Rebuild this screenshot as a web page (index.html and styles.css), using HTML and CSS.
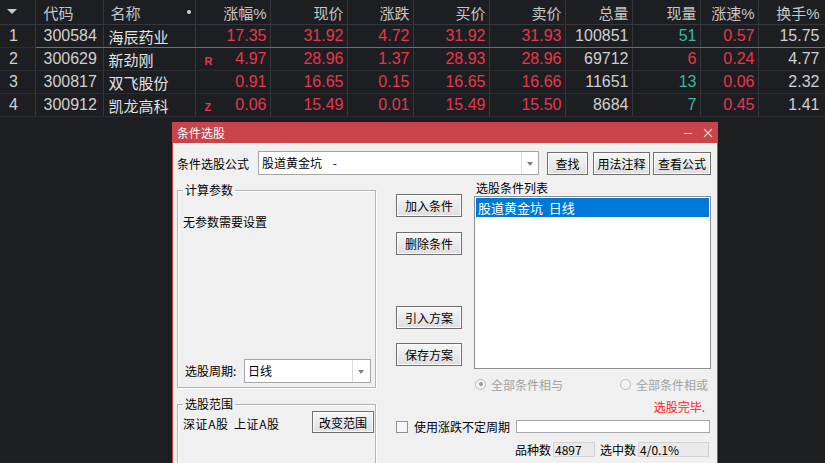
FILE: index.html
```html
<!DOCTYPE html>
<html lang="zh-CN">
  <head>
    <meta charset="UTF-8" />
    <meta name="viewport" content="width=device-width, initial-scale=1.0" />
    <title>条件选股</title>
    <link rel="stylesheet" href="styles.css">
  </head>
  <body>
    <table class="quotes">
      <colgroup>
        <col class="c-idx"><col class="c-code"><col class="c-name"><col class="c-pct">
        <col class="c-price"><col class="c-chg"><col class="c-bid"><col class="c-ask">
        <col class="c-vol"><col class="c-cur"><col class="c-speed"><col class="c-turn">
      </colgroup>
      <thead>
        <tr>
          <th><svg class="sort-icon" width="10" height="6" viewBox="0 0 10 6"><polygon points="0,0 10,0 5,5" fill="#c8c8c8"/></svg></th>
          <th>代码</th>
          <th>名称<span class="dot"></span></th>
          <th>涨幅%</th>
          <th>现价</th>
          <th>涨跌</th>
          <th>买价</th>
          <th>卖价</th>
          <th>总量</th>
          <th>现量</th>
          <th>涨速%</th>
          <th>换手%</th>
        </tr>
      </thead>
      <tbody>
        <tr class="current">
          <td>1</td><td>300584</td><td>海辰药业</td>
          <td class="up">17.35</td><td class="up">31.92</td><td class="up">4.72</td>
          <td class="up">31.92</td><td class="up">31.93</td><td>100851</td>
          <td class="down">51</td><td class="up">0.57</td><td>15.75</td>
        </tr>
        <tr>
          <td>2</td><td>300629</td><td>新劲刚</td>
          <td class="up"><span class="mark">R</span>4.97</td><td class="up">28.96</td><td class="up">1.37</td>
          <td class="up">28.93</td><td class="up">28.96</td><td>69712</td>
          <td class="up">6</td><td class="up">0.24</td><td>4.77</td>
        </tr>
        <tr>
          <td>3</td><td>300817</td><td>双飞股份</td>
          <td class="up">0.91</td><td class="up">16.65</td><td class="up">0.15</td>
          <td class="up">16.65</td><td class="up">16.66</td><td>11651</td>
          <td class="down">13</td><td class="up">0.06</td><td>2.32</td>
        </tr>
        <tr>
          <td>4</td><td>300912</td><td>凯龙高科</td>
          <td class="up"><span class="mark">Z</span>0.06</td><td class="up">15.49</td><td class="up">0.01</td>
          <td class="up">15.49</td><td class="up">15.50</td><td>8684</td>
          <td class="down">7</td><td class="up">0.45</td><td>1.41</td>
        </tr>
      </tbody>
    </table>

    <div class="dialog">
      <div class="dlg-title">
        <span>条件选股</span>
        <span class="win-btns">
          <svg width="10" height="10" viewBox="0 0 10 10"><line x1="1" y1="5.5" x2="9" y2="5.5" stroke="#f2d2d4" stroke-width="1"/></svg>
          <svg width="10" height="10" viewBox="0 0 10 10"><path d="M1 1 L9 9 M9 1 L1 9" stroke="#f2d2d4" stroke-width="1.1"/></svg>
        </span>
      </div>
      <div class="dlg-body">
        <div class="formula-row">
          <label class="formula-label">条件选股公式</label>
          <div class="combo formula-combo">
            <span class="combo-text">股道黄金坑&nbsp;&nbsp;&nbsp;&nbsp;-</span>
            <span class="combo-arrow"></span>
          </div>
          <button class="btn btn-find">查找</button>
          <button class="btn btn-usage">用法注释</button>
          <button class="btn btn-view">查看公式</button>
        </div>

        <div class="main">
          <div class="left-col">
            <fieldset class="group params">
              <legend>计算参数</legend>
              <div class="params-body">
                <div class="no-params">无参数需要设置</div>
                <div class="period-row">
                  <label class="period-label">选股周期:</label>
                  <div class="combo period-combo">
                    <span class="combo-text">日线</span>
                    <span class="combo-arrow"></span>
                  </div>
                </div>
              </div>
            </fieldset>
            <fieldset class="group range">
              <legend>选股范围</legend>
              <div class="range-row">
                <span class="range-text">深证A股 上证A股</span>
                <button class="btn btn-range">改变范围</button>
              </div>
            </fieldset>
          </div>

          <div class="right-col">
            <div class="cond-area">
              <div class="cond-btns">
                <button class="btn btn-add">加入条件</button>
                <button class="btn btn-del">删除条件</button>
                <button class="btn btn-import">引入方案</button>
                <button class="btn btn-save">保存方案</button>
              </div>
              <div class="cond-list-wrap">
                <div class="list-label">选股条件列表</div>
                <div class="cond-list">
                  <div class="item selected">股道黄金坑&nbsp;&nbsp;日线</div>
                </div>
              </div>
            </div>

            <div class="radio-row">
              <span class="radio-opt"><span class="radio checked"></span>全部条件相与</span>
              <span class="radio-opt"><span class="radio"></span>全部条件相或</span>
            </div>

            <div class="status">选股完毕.</div>

            <div class="check-row">
              <span class="checkbox"></span>
              <span class="check-label">使用涨跌不定周期</span>
              <span class="edit period-edit"></span>
            </div>

            <div class="count-row">
              <span>品种数</span>
              <span class="edit readonly count-total">4897</span>
              <span class="count-sel-label">选中数</span>
              <span class="edit readonly count-sel">4/0.1%</span>
            </div>
          </div>
        </div>
      </div>
    </div>
  </body>
</html>
```

FILE: styles.css
```css
html,
body {
  margin: 0;
  height: 100%;
  overflow: hidden;
}

body {
  position: relative;
  background-color: #1d1e22;
  font-family: "Liberation Sans", "Noto Sans CJK SC", sans-serif;
}

/* quote table */
.quotes {
  border-collapse: collapse;
  table-layout: fixed;
  width: 825px;
  font-size: 16px;
}

.c-idx { width: 35px; }
.c-code { width: 68px; }
.c-name { width: 92px; }
.c-pct { width: 75px; }
.c-price { width: 77px; }
.c-chg { width: 66px; }
.c-bid { width: 76px; }
.c-ask { width: 76px; }
.c-vol { width: 67px; }
.c-cur { width: 68px; }
.c-speed { width: 58px; }
.c-turn { width: 67px; }

.quotes th {
  height: 24px;
  padding: 0 3px;
  font-weight: normal;
  font-size: 15px;
  color: #c6c6c6;
  text-align: right;
  white-space: nowrap;
  overflow: hidden;
  border-right: 1px solid #36373c;
  border-bottom: 1px solid #36373c;
}

.quotes td {
  height: 22px;
  padding: 0 3px;
  color: #d0d0d0;
  text-align: right;
  white-space: nowrap;
  overflow: hidden;
  border-right: 1px solid #36373c;
  border-bottom: 1px solid #2c2d31;
}

.quotes th:nth-child(1) { text-align: left; padding-left: 7px; }
.quotes th:nth-child(2) { text-align: left; padding-left: 8px; }
.quotes th:nth-child(3) { text-align: left; padding-left: 7px; }
.quotes th:nth-child(12) { padding-right: 5px; }

.quotes td:nth-child(1) { text-align: left; padding-left: 9px; }
.quotes td:nth-child(2) { text-align: left; padding-left: 8px; }
.quotes td:nth-child(3) { text-align: left; padding-left: 5px; font-size: 15px; color: #e4e4e4; }
.quotes td:nth-child(12) { padding-right: 5px; }

.sort-icon {
  display: block;
}

.dot {
  float: right;
  width: 4px;
  height: 4px;
  margin: 8px 1px 0 0;
  border-radius: 50%;
  background-color: #d0d0d0;
}

.quotes tr.current td:not(:first-child) {
  border-bottom: 1px solid #4b6fd0;
}

.quotes td.up {
  color: #e8364e;
}

.quotes td.down {
  color: #35bb9d;
}

.mark {
  float: left;
  margin-left: 6px;
  padding-top: 5px;
  font-size: 11px;
  font-weight: bold;
  line-height: 12px;
  color: #e8364e;
}

/* dialog window */
.dialog {
  position: absolute;
  left: 172px;
  top: 122px;
  width: 546px;
  height: 345px;
  box-sizing: border-box;
  border: 1px solid #c8434a;
  border-top: none;
  background-color: #f0f0f0;
  font-family: "Noto Sans CJK SC", sans-serif;
  font-size: 12px;
  color: #000;
}

.dlg-title {
  display: flex;
  justify-content: space-between;
  align-items: center;
  height: 21px;
  padding: 0 4px 0 4px;
  background-color: #c8434a;
  color: #fff;
  font-size: 12px;
}

.win-btns {
  display: flex;
  gap: 10px;
}

.win-btns svg {
  display: block;
}

.dlg-body {
  padding: 8px 5px 0 4px;
}

.formula-row {
  display: flex;
  align-items: center;
  height: 24px;
}

.formula-label {
  width: 81px;
}

.combo {
  display: flex;
  box-sizing: border-box;
  height: 24px;
  border: 1px solid #a6a6a6;
  background-color: #fff;
}

.combo-text {
  flex: 1;
  padding-left: 3px;
  line-height: 22px;
}

.combo-arrow {
  width: 16px;
  border-left: 1px solid #dcdcdc;
  position: relative;
}

.combo-arrow::after {
  content: "";
  position: absolute;
  left: 5px;
  top: 10px;
  border-left: 3px solid transparent;
  border-right: 3px solid transparent;
  border-top: 4px solid #808080;
}

.formula-combo {
  width: 281px;
  margin-right: 8px;
}

.btn {
  box-sizing: border-box;
  height: 23px;
  padding: 0;
  border: 1px solid #707070;
  background: linear-gradient(#f6f6f6, #dedede);
  box-shadow: inset 0 0 0 1px #fbfbfb;
  font-family: "Noto Sans CJK SC", sans-serif;
  font-size: 12px;
  color: #000;
}

.btn-find { width: 41px; }
.btn-usage { width: 57px; margin-left: 5px; }
.btn-view { width: 58px; margin-left: 3px; }

.main {
  display: flex;
  margin-top: 8px;
}

.left-col {
  width: 199px;
}

/* group boxes */
.group {
  margin: 0;
  padding: 0 1px 4px 5px;
  border: 1px solid #b4b4b4;
  box-shadow: inset 1px 1px 0 #fff, 1px 1px 0 #fff;
}

.group legend {
  padding: 0 2px;
  line-height: 14px;
}

.params-body {
  display: flex;
  flex-direction: column;
  height: 186px;
  padding-top: 18px;
  box-sizing: border-box;
  line-height: 14px;
}

.period-row {
  display: flex;
  align-items: center;
  margin-top: auto;
  height: 24px;
}

.period-label {
  width: 61px;
  padding-left: 2px;
  box-sizing: border-box;
}

.period-combo {
  width: 127px;
}

.period-combo .combo-arrow {
  width: 17px;
}

.range {
  margin-top: 9px;
  padding-bottom: 40px;
}

.range-row {
  display: flex;
  justify-content: space-between;
  align-items: center;
  height: 22px;
}

.range-text {
  letter-spacing: 0.6px;
  word-spacing: 2px;
  padding-top: 3px;
}

.btn-range {
  width: 62px;
  height: 22px;
}

/* right side */
.right-col {
  width: 315px;
  margin-left: 20px;
}

.cond-area {
  display: flex;
}

.cond-btns {
  display: flex;
  flex-direction: column;
  width: 66px;
  margin-right: 12px;
  padding-top: 11px;
}

.btn-del { margin-top: 15px; }
.btn-import { margin-top: 51px; }
.btn-save { margin-top: 14px; }

.cond-list-wrap {
  width: 237px;
}

.list-label {
  height: 16px;
  margin-top: -3px;
  padding-left: 2px;
  line-height: 16px;
}

.cond-list {
  box-sizing: border-box;
  height: 173px;
  padding: 1px;
  border: 1px solid #8f8f8f;
  background-color: #fff;
}

.cond-list .item {
  height: 19px;
  padding-left: 2px;
  line-height: 19px;
  font-size: 13px;
}

.cond-list .item.selected {
  background-color: #0078d7;
  color: #fff;
}

.radio-row {
  display: flex;
  justify-content: space-between;
  align-items: center;
  height: 14px;
  margin-top: 8px;
  padding: 0 3px 0 79px;
  color: #a2a2a2;
}

.radio-opt {
  display: flex;
  align-items: center;
  gap: 5px;
}

.radio {
  position: relative;
  width: 11px;
  height: 11px;
  box-sizing: border-box;
  border: 1px solid #bcbcbc;
  border-radius: 50%;
  background-color: #f4f4f4;
}

.radio.checked::after {
  content: "";
  position: absolute;
  left: 2.5px;
  top: 2.5px;
  width: 4px;
  height: 4px;
  border-radius: 50%;
  background-color: #9a9a9a;
}

.status {
  height: 14px;
  margin-top: 9px;
  padding-right: 6px;
  line-height: 14px;
  text-align: right;
  color: #ff2020;
}

.check-row {
  display: flex;
  align-items: center;
  height: 13px;
  margin-top: 6px;
}

.checkbox {
  width: 12px;
  height: 12px;
  box-sizing: border-box;
  border: 1px solid #8f8f8f;
  background-color: #f6f6f6;
}

.check-label {
  margin-left: 6px;
}

.edit {
  box-sizing: border-box;
  border: 1px solid #a8a8a8;
  background-color: #fff;
}

.period-edit {
  width: 194px;
  height: 13px;
  margin-left: auto;
  margin-right: 1px;
}

.count-row {
  display: flex;
  align-items: center;
  height: 15px;
  margin-top: 9px;
  padding-left: 119px;
  line-height: 14px;
}

.edit.readonly {
  height: 15px;
  margin-left: 2px;
  padding-left: 1px;
  border-color: #d2d2d2;
  background-color: #e9e9e9;
  line-height: 13px;
}

.count-total { width: 42px; }
.count-sel-label { margin-left: 5px; }
.count-sel { width: 71px; }
```
